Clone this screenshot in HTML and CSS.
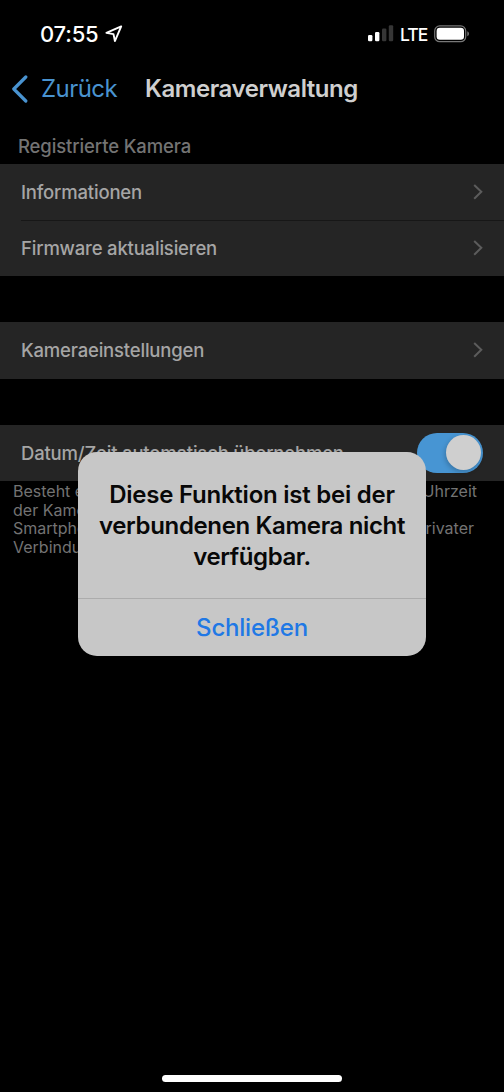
FILE: index.html
```html
<!DOCTYPE html>
<html lang="de">
<head>
<meta charset="utf-8">
<title>Kameraverwaltung</title>
<link rel="stylesheet" href="styles.css">
</head>
<body>
<div class="screen">
  <header class="status">
    <span class="time">07:55</span>
    <svg class="location" width="18" height="18" viewBox="0 0 18 18"><path d="M16.2 1.4 1.4 7.9 8.5 9.1 9.9 16.1Z" fill="none" stroke="#fff" stroke-width="1.9" stroke-linejoin="round"/></svg>
    <div class="status-right">
      <svg width="26" height="17" viewBox="0 0 26 17"><rect x="0" y="10" width="4.4" height="6.2" rx="1.2" fill="#fff"/><rect x="7" y="7" width="4.4" height="9.2" rx="1.2" fill="#fff"/><rect x="14" y="3.5" width="4.4" height="12.7" rx="1.2" fill="#363636"/><rect x="20.8" y="0.3" width="4.4" height="15.9" rx="1.2" fill="#363636"/></svg>
      <span class="lte">LTE</span>
      <svg width="36" height="18" viewBox="0 0 36 18"><rect x=".7" y=".9" width="31" height="15.8" rx="5" fill="none" stroke="#777" stroke-width="1.2"/><rect x="2.6" y="2.8" width="27.4" height="12" rx="3.2" fill="#fff"/><path d="M33.3 6.3c2.2.8 2.2 4.2 0 5z" fill="#777"/></svg>
    </div>
  </header>
  <nav class="nav">
    <svg width="18" height="28" viewBox="0 0 18 28"><path d="M15.8 2 3.8 14 15.8 26" fill="none" stroke="#4993d0" stroke-width="3.2" stroke-linecap="round" stroke-linejoin="round"/></svg>
    <span class="back">Zurück</span>
    <h1 class="title">Kameraverwaltung</h1>
  </nav>
  <main>
    <h2 class="section-title"><span>Registrierte Kamera</span></h2>
    <section class="group">
      <div class="row"><span>Informationen</span><svg class="chevron" viewBox="0 0 10 16"><path d="M1.2 1 8.3 7.8 1.2 14.7" /></svg></div>
      <div class="row row-line"><span>Firmware aktualisieren</span><svg class="chevron" viewBox="0 0 10 16"><path d="M1.2 1 8.3 7.8 1.2 14.7" /></svg></div>
    </section>
    <section class="group">
      <div class="row"><span>Kameraeinstellungen</span><svg class="chevron" viewBox="0 0 10 16"><path d="M1.2 1 8.3 7.8 1.2 14.7" /></svg></div>
    </section>
    <section class="group group-last">
      <div class="row"><span>Datum/Zeit automatisch übernehmen</span><span class="toggle"><span class="knob"></span></span></div>
    </section>
    <div class="note">
      <div class="note-line"><span>Besteht eine</span><span>Uhrzeit</span></div>
      <div class="note-line"><span>der Kamera</span></div>
      <div class="note-line note-short"><span>Smartphone</span><span>privater</span></div>
      <div class="note-line"><span>Verbindung</span></div>
    </div>
  </main>
  <div class="alert" role="alertdialog">
    <div class="message">
      <div class="m1">Diese Funktion ist bei der</div>
      <div class="m2">verbundenen Kamera nicht</div>
      <div class="m3">verfügbar.</div>
    </div>
    <div class="action"><span>Schließen</span></div>
  </div>
  <div class="home"></div>
</div>
</body>
</html>
```
FILE: styles.css
```css
* { box-sizing: border-box; }
body { margin: 0; background: #000; font-family: Inter, "Liberation Sans", sans-serif; }
svg { display: block; flex: none; }
.screen { position: relative; width: 504px; height: 1092px; overflow: hidden; background: #000; display: flex; flex-direction: column; }
.status { height: 62px; padding: 20px 34px 0 40px; display: flex; align-items: flex-start; color: #fff; }
.time { font-size: 22px; line-height: 28px; font-weight: 550; letter-spacing: -0.2px; white-space: nowrap; width: 65px; }
.location { margin-top: 5px; }
.status-right { margin-left: auto; display: flex; align-items: flex-start; padding-top: 5px; }
.lte { width: 34px; margin-left: 6px; font-size: 17.5px; line-height: 20px; font-weight: 500; letter-spacing: -0.9px; }
.nav { height: 54px; padding-left: 10px; display: flex; align-items: center; }
.back { width: 117px; padding-left: 13px; color: #4993d0; font-size: 24px; line-height: 30px; letter-spacing: -0.55px; }
.title { margin: 0; font-size: 24px; line-height: 30px; font-weight: 600; letter-spacing: -0.45px; color: #cfcfcf; }
.section-title { margin: 0; height: 47.5px; padding: 18px 18px 0; font-size: 18.5px; line-height: 24px; font-weight: 500; letter-spacing: -0.12px; color: #737373; }
.group { background: #252525; margin-bottom: 46px; }
.group-last { margin-bottom: 0; }
.row { height: 56.4px; padding: 0 21px 0 21px; display: flex; align-items: center; justify-content: space-between; font-size: 18.5px; font-weight: 500; letter-spacing: -0.19px; color: #a5a5a5; white-space: nowrap; }
.row-line { background: linear-gradient(#171717, #171717) 21px 0 / 483px 1px no-repeat; }
.chevron { width: 10px; height: 16px; fill: none; stroke: #5c5c5c; stroke-width: 2; }
.toggle { width: 66px; height: 40px; border-radius: 20px; background: #4795d3; padding: 2.5px; display: flex; justify-content: flex-end; }
.knob { width: 35px; height: 35px; border-radius: 50%; background: #cfcfcf; box-shadow: -1px 2px 5px rgba(0,0,0,.22); }
.note { padding: 1px 0 0 13px; color: #737373; font-size: 16px; line-height: 18.6px; }
.note-line { display: flex; justify-content: space-between; width: 464px; }
.note-short { width: 461px; }
.alert { position: absolute; left: 78px; top: 452px; width: 348px; height: 204px; border-radius: 19px; background: #c7c7c7; color: #080808; text-align: center; overflow: hidden; display: flex; flex-direction: column; }
.message { height: 147px; padding-top: 27px; font-size: 24px; line-height: 31px; font-weight: 600; white-space: nowrap; }
.m1 { letter-spacing: -0.24px; }
.m2 { letter-spacing: -0.35px; }
.m3 { letter-spacing: -0.4px; }
.action { flex: 1; border-top: 1px solid #acacac; color: #2078e5; font-size: 24px; line-height: 57px; font-weight: 550; letter-spacing: -0.2px; }
.home { width: 180px; height: 7px; margin: auto auto 10px; border-radius: 4px; background: #fff; }
```
